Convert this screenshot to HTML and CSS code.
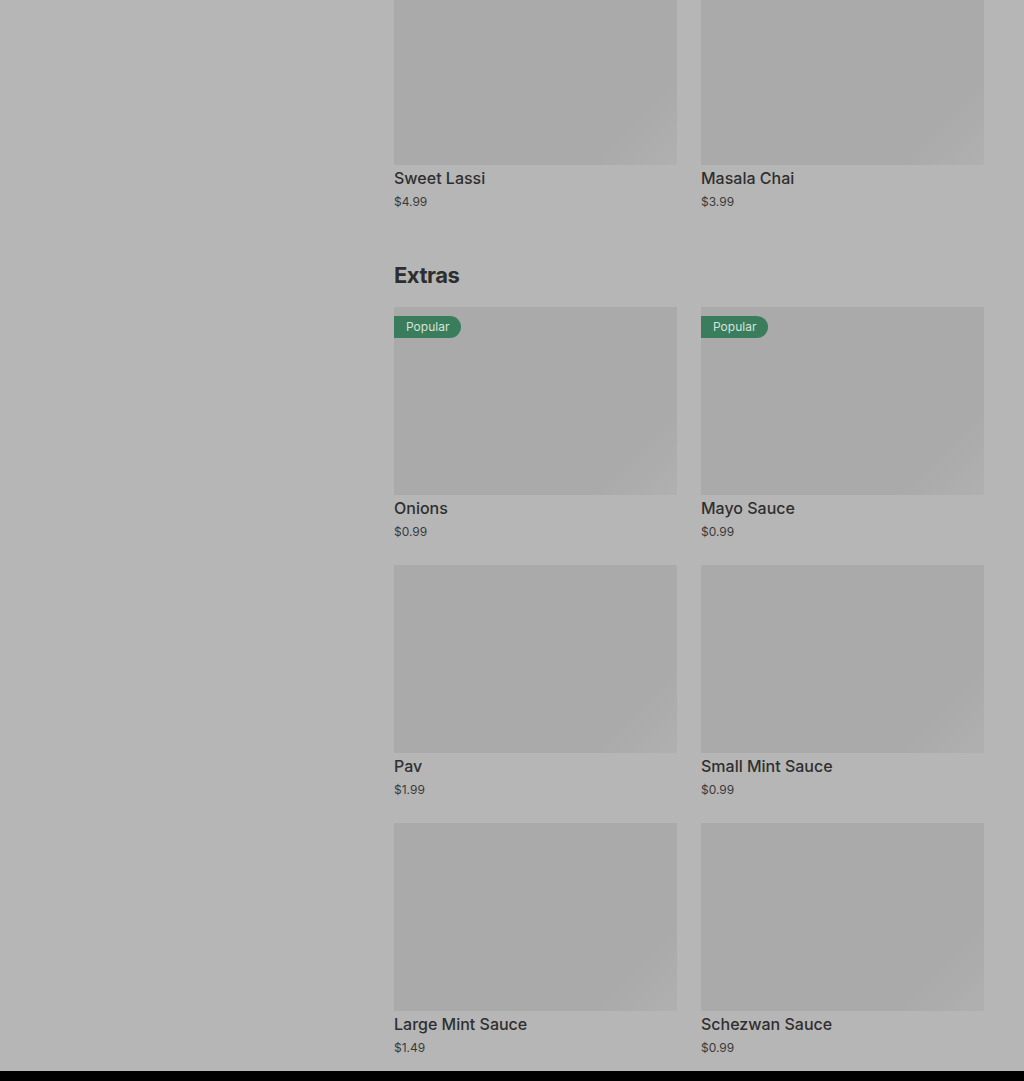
FILE: index.html
```html
<!DOCTYPE html>
<html lang="en">
<head>
    <meta charset="UTF-8">
    <meta name="viewport" content="width=device-width, initial-scale=1.0">
    <title>Menu</title>
    <link rel="stylesheet" href="styles.css">
</head>
<body>
    <div class="page">
        <aside class="sidebar"></aside>

        <main class="menu">
            <section class="menu-section">
                <div class="item-grid">
                    <div class="item">
                        <div class="item-img"></div>
                        <div class="item-name">Sweet Lassi</div>
                        <div class="item-price">$4.99</div>
                    </div>
                    <div class="item">
                        <div class="item-img"></div>
                        <div class="item-name">Masala Chai</div>
                        <div class="item-price">$3.99</div>
                    </div>
                </div>
            </section>

            <section class="menu-section">
                <h2 class="section-title">Extras</h2>
                <div class="item-grid">
                    <div class="item">
                        <div class="item-img">
                            <span class="badge">Popular</span>
                        </div>
                        <div class="item-name">Onions</div>
                        <div class="item-price">$0.99</div>
                    </div>
                    <div class="item">
                        <div class="item-img">
                            <span class="badge">Popular</span>
                        </div>
                        <div class="item-name">Mayo Sauce</div>
                        <div class="item-price">$0.99</div>
                    </div>
                    <div class="item">
                        <div class="item-img"></div>
                        <div class="item-name">Pav</div>
                        <div class="item-price">$1.99</div>
                    </div>
                    <div class="item">
                        <div class="item-img"></div>
                        <div class="item-name">Small Mint Sauce</div>
                        <div class="item-price">$0.99</div>
                    </div>
                    <div class="item">
                        <div class="item-img"></div>
                        <div class="item-name">Large Mint Sauce</div>
                        <div class="item-price">$1.49</div>
                    </div>
                    <div class="item">
                        <div class="item-img"></div>
                        <div class="item-name">Schezwan Sauce</div>
                        <div class="item-price">$0.99</div>
                    </div>
                </div>
            </section>
        </main>
    </div>

    <footer class="bottom-bar"></footer>
</body>
</html>
```

FILE: styles.css
```css
body{
    margin: 0;
    background-color: #b6b6b6;
    font-family: Inter, "Noto Sans", sans-serif;
    color: #303030;
}

.page{
    display: flex;
    margin-top: -23px;
}

.sidebar{
    width: 394px;
    flex-shrink: 0;
}

.menu{
    width: 590px;
}

.menu-section{
    margin-bottom: 45px;
}

.menu-section:last-child{
    margin-bottom: 0;
}

.section-title{
    margin: 0 0 16px 0;
    padding-top: 4px;
    font-size: 22px;
    line-height: 32px;
    font-weight: 700;
    letter-spacing: -0.5px;
    color: #2e2e2e;
}

.item-grid{
    display: grid;
    grid-template-columns: 283px 283px;
    column-gap: 24px;
    row-gap: 25px;
}

.item-img{
    position: relative;
    height: 188px;
    background: linear-gradient(135deg, #aaaaaa 82%, #b0b0b0);
}

.badge{
    position: absolute;
    top: 9px;
    left: 0;
    height: 22px;
    line-height: 22px;
    padding: 0 12px;
    font-size: 12px;
    color: #d6e3db;
    background-color: #3a7d5c;
    border-radius: 0 11px 11px 0;
}

.item-name{
    margin-top: 3px;
    font-size: 16px;
    line-height: 20px;
    font-weight: 500;
    color: #2f2f2f;
}

.item-price{
    margin-top: 6px;
    font-size: 12px;
    line-height: 16px;
    color: #3a3a3a;
}

.bottom-bar{
    margin-top: 15px;
    height: 200px;
    background-color: #000;
}
```
